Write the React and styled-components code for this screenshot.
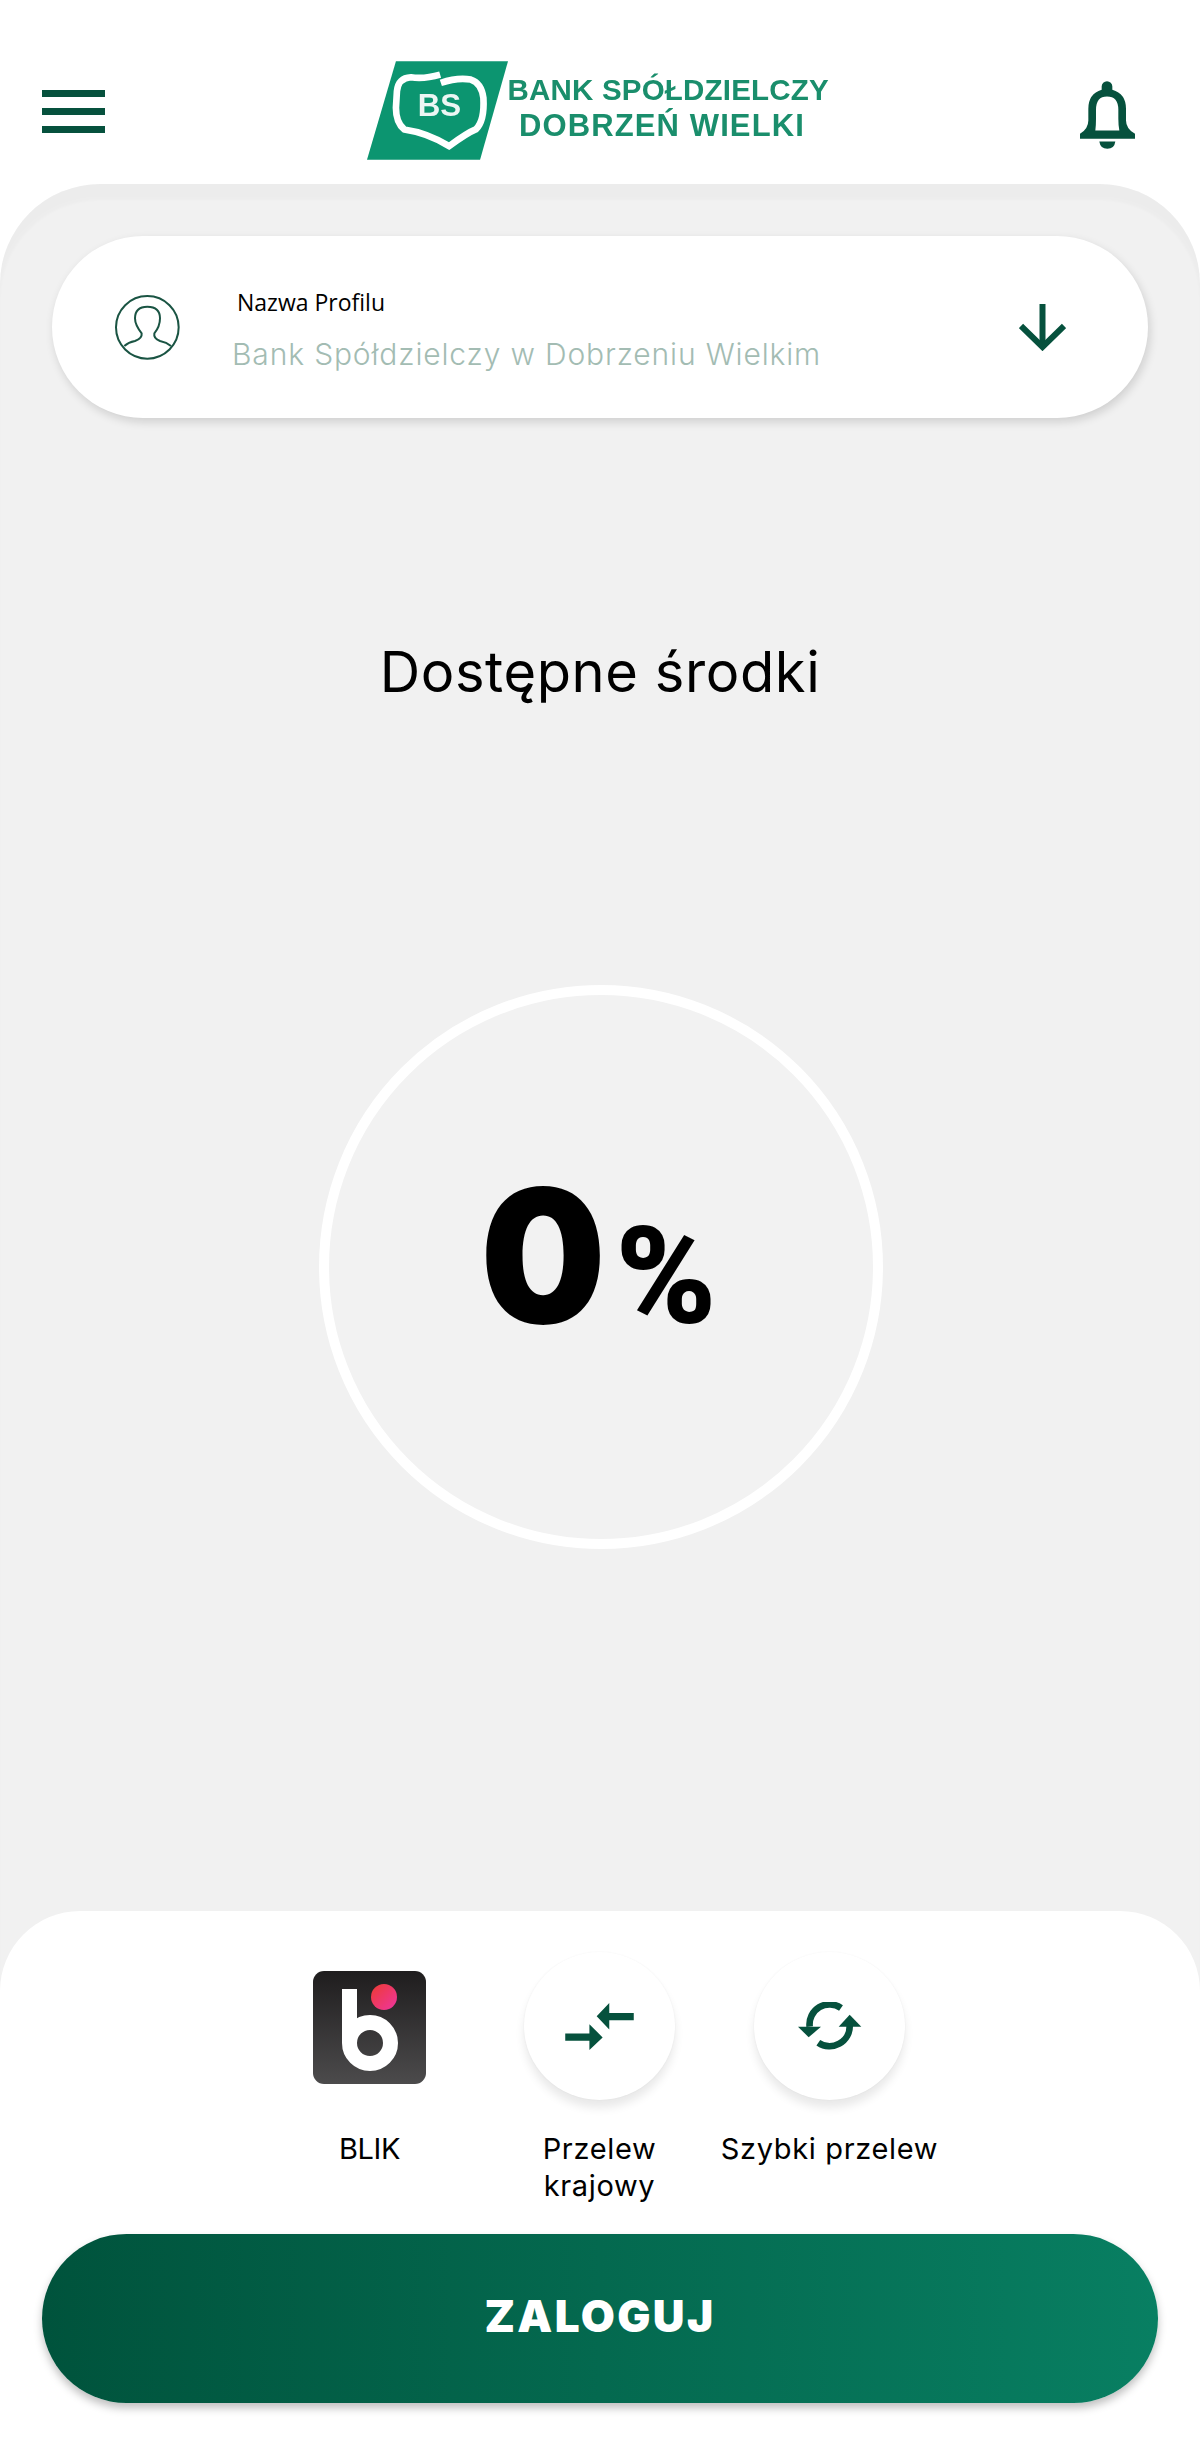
import React from "react";
import styled, { createGlobalStyle } from "styled-components";

const GREEN = "#06513d";
const SANS = '"Inter", "Liberation Sans", sans-serif';

const Reset = createGlobalStyle`
  html, body { margin: 0; padding: 0; background: #fff; }
  * { box-sizing: border-box; }
`;

const Page = styled.div`
  width: 1200px;
  height: 2443px;
  display: flex;
  flex-direction: column;
  background: #fff;
  font-family: ${SANS};
  overflow: hidden;
`;

const Header = styled.header`
  height: 184px;
  flex: none;
  display: flex;
  align-items: flex-start;
  justify-content: space-between;
  padding: 61px 65px 0 42px;
`;

const Burger = styled.button`
  width: 63px;
  margin-top: 29px;
  padding: 0;
  border: 0;
  background: none;
  display: flex;
  flex-direction: column;
  gap: 11px;
`;

const BurgerBar = styled.span`
  display: block;
  height: 7px;
  background: ${GREEN};
`;

const Logo = styled.div`
  margin-left: 10px;
  display: flex;
  filter: blur(0.35px);
`;

const LogoMark = styled.svg`
  display: block;
  width: 141px;
  height: 99px;
`;

const LogoWords = styled.div`
  width: 321px;
  padding-top: 11px;
  text-align: center;
  color: #1a8e6c;
  font-family: "Liberation Sans", Arial, sans-serif;
  font-weight: 700;
  line-height: 36px;
  white-space: nowrap;
`;

const LogoLine = styled.div`
  padding-right: ${(p) => p.$inset || 0}px;
  font-size: ${(p) => p.$size}px;
  letter-spacing: ${(p) => p.$track}px;
`;

const BellIcon = styled.svg`
  display: block;
  width: 55px;
  height: 68px;
  margin-top: 20px;
`;

const Panel = styled.main`
  flex: 1;
  display: flex;
  flex-direction: column;
  align-items: center;
  background: #f1f1f1;
  border-radius: 100px 100px 0 0;
  box-shadow: inset 0 16px 3px rgba(0, 0, 0, 0.02);
  padding-top: 52px;
`;

const ProfileCard = styled.section`
  width: 1096px;
  height: 182px;
  flex: none;
  display: flex;
  align-items: center;
  border-radius: 91px;
  background: #fff;
  box-shadow: 2px 4px 10px rgba(0, 0, 0, 0.14);
  padding: 0 82px 0 63px;
`;

const Avatar = styled.svg`
  display: block;
  width: 65px;
  height: 65px;
  flex: none;
`;

const ProfileText = styled.div`
  flex: 1;
  margin-left: 52px;
  display: flex;
  flex-direction: column;
  gap: 19px;
  padding-top: 4px;
`;

const ProfileLabel = styled.div`
  padding-left: 5px;
  font-family: "Open Sans", sans-serif;
  font-size: 23px;
  line-height: 30px;
  color: #000;
`;

const ProfileName = styled.div`
  font-weight: 300;
  font-size: 30px;
  line-height: 36px;
  letter-spacing: 0.85px;
  color: #a3bcb3;
  white-space: nowrap;
`;

const ArrowIcon = styled.svg`
  display: block;
  width: 47px;
  height: 47px;
  flex: none;
`;

const Title = styled.h1`
  margin: 214px 0 0;
  font-weight: 400;
  font-size: 56px;
  line-height: 80px;
  letter-spacing: 0.6px;
  color: #000;
`;

const Gauge = styled.div`
  margin: 273px 0 0 2px;
  width: 564px;
  height: 564px;
  flex: none;
  display: flex;
  align-items: center;
  justify-content: center;
  border: 10px solid #fff;
  border-radius: 50%;
  background: #f2f2f2;
`;

const GaugeValue = styled.div`
  display: flex;
  align-items: baseline;
  gap: 6px;
  margin: 0 8px 22px 0;
  color: #000;
  font-weight: 900;
  line-height: 1;
`;

const GaugeNumber = styled.span`
  display: inline-block;
  font-family: Inter, sans-serif;
  font-size: 186px;
  transform: scaleX(0.95);
`;

const GaugeUnit = styled.span`
  font-family: Roboto, sans-serif;
  font-size: 136px;
`;

const Sheet = styled.section`
  margin-top: auto;
  width: 100%;
  height: 532px;
  flex: none;
  background: #fff;
  border-radius: 80px 80px 0 0;
  padding: 41px 42px 0;
  display: flex;
  flex-direction: column;
`;

const Shortcuts = styled.div`
  height: 282px;
  flex: none;
  display: flex;
  justify-content: center;
  padding-right: 1px;
`;

const Shortcut = styled.div`
  width: 230px;
  display: flex;
  flex-direction: column;
  align-items: center;
  text-align: center;
`;

const IconSlot = styled.div`
  height: 178px;
  display: flex;
  align-items: flex-start;
  justify-content: center;
  padding-top: ${(p) => p.$top || 0}px;
`;

const RoundIcon = styled.div`
  width: 151px;
  height: 148px;
  border-radius: 50%;
  background: #fff;
  box-shadow: 0 8px 10px rgba(0, 0, 0, 0.09), 0 0 2px rgba(0, 0, 0, 0.05);
  display: flex;
  align-items: center;
  justify-content: center;
`;

const ShortcutLabel = styled.div`
  font-size: 29px;
  line-height: 37px;
  letter-spacing: ${(p) => p.$track ?? 0.65}px;
  color: #000;
  white-space: nowrap;
`;

const LoginButton = styled.button`
  width: 1116px;
  height: 169px;
  flex: none;
  border: 0;
  border-radius: 85px;
  background: linear-gradient(90deg, #00533c, #087f62);
  box-shadow: 0 5px 8px rgba(0, 0, 0, 0.25);
  padding: 0 0 5px;
  color: #fff;
  font-family: ${SANS};
  font-weight: 900;
  font-size: 44px;
  letter-spacing: 2.4px;
`;

function BlikMark() {
  return (
    <svg width="113" height="113" viewBox="0 0 113 113" style={{ display: "block" }}>
      <defs>
        <linearGradient id="blikTile" x1="0" y1="0" x2="0" y2="1">
          <stop offset="0" stopColor="#1f1d1e" />
          <stop offset="1" stopColor="#4c4b4c" />
        </linearGradient>
        <linearGradient id="blikDot" x1="0" y1="0" x2="1" y2="1">
          <stop offset="0" stopColor="#ee3b32" />
          <stop offset="1" stopColor="#ee35a0" />
        </linearGradient>
      </defs>
      <rect width="113" height="113" rx="11" fill="url(#blikTile)" />
      <rect x="29" y="18" width="15" height="54" fill="#fff" />
      <circle cx="57" cy="72" r="20.5" fill="none" stroke="#fff" strokeWidth="15" />
      <circle cx="71" cy="26" r="13" fill="url(#blikDot)" />
    </svg>
  );
}

function TransferIcon() {
  return (
    <svg width="69" height="47" viewBox="195 218 207 142" fill={GREEN} style={{ display: "block" }}>
      <polygon points="290,258 328,218 328,248 402,248 402,270 328,270 328,298" />
      <polygon points="308,322 268,282 268,310 195,310 195,332 268,332 268,360" />
    </svg>
  );
}

function RefreshIcon() {
  return (
    <svg width="65" height="48" viewBox="890 216 195 144" style={{ display: "block" }}>
      <path d="M1022 234A60 60 0 0 0 928 290" fill="none" stroke={GREEN} strokeWidth="20" />
      <path d="M954 338A60 60 0 0 0 1048 286" fill="none" stroke={GREEN} strokeWidth="20" />
      <polygon points="893,290 962,290 925,322" fill={GREEN} />
      <polygon points="1015,290 1083,290 1048,254" fill={GREEN} />
    </svg>
  );
}

export default function App() {
  return (
    <Page>
      <Reset />
      <Header>
        <Burger aria-label="Menu">
          <BurgerBar />
          <BurgerBar />
          <BurgerBar />
        </Burger>
        <Logo>
          <LogoMark viewBox="18 20 424 296">
            <polygon points="18,316 105,20 442,20 358,316" fill="#0c9570" />
            <path
              d="M238 60Q190 74 150 68Q112 70 108 110L105 160Q105 205 130 225Q200 235 265 275Q320 235 345 225Q372 200 368 130Q362 85 330 75Q290 68 240 85"
              fill="none"
              stroke="#fff"
              strokeWidth="20"
            />
            <text
              x="236"
              y="184"
              textAnchor="middle"
              fontFamily="Liberation Sans, Arial, sans-serif"
              fontWeight="700"
              fontSize="94"
              fill="#fff"
              opacity="0.92"
            >
              BS
            </text>
          </LogoMark>
          <LogoWords>
            <LogoLine $size={29.5} $track={0.2} $inset={4}>BANK SPÓŁDZIELCZY</LogoLine>
            <LogoLine $size={31} $track={1.1} $inset={12}>DOBRZEŃ WIELKI</LogoLine>
          </LogoWords>
        </Logo>
        <BellIcon viewBox="57 32 165 203" fill={GREEN}>
          <path
            fillRule="evenodd"
            d="M57 205L57 190Q82 175 82 150L82 115Q82 70 122 58L122 48A16 16 0 0 1 154 48L154 58Q195 70 195 115L195 150Q195 175 222 190L222 205ZM103 180L175 180Q172 165 172 145L172 118Q172 78 138 78Q105 78 105 118L105 145Q105 165 103 180Z"
          />
          <path d="M115 213L163 213Q160 235 139 235Q118 235 115 213Z" />
        </BellIcon>
      </Header>

      <Panel>
        <ProfileCard>
          <Avatar viewBox="30 30 195 195" fill="none" stroke="#1a5443" strokeWidth="6">
            <circle cx="127" cy="127" r="94" />
            <path d="M58 183Q70 172 90 168Q112 160 110 145Q90 120 90 100Q90 65 127 65Q165 65 165 100Q165 125 148 145Q145 160 165 168Q185 172 198 183" />
          </Avatar>
          <ProfileText>
            <ProfileLabel>Nazwa Profilu</ProfileLabel>
            <ProfileName>Bank Spółdzielczy w Dobrzeniu Wielkim</ProfileName>
          </ProfileText>
          <ArrowIcon viewBox="0 0 47 47" fill="none" stroke={GREEN} strokeWidth="6">
            <path d="M23.5 0V43" />
            <path d="M2 22L23.5 43L45 22" />
          </ArrowIcon>
        </ProfileCard>

        <Title>Dostępne środki</Title>

        <Gauge>
          <GaugeValue>
            <GaugeNumber>0</GaugeNumber>
            <GaugeUnit>%</GaugeUnit>
          </GaugeValue>
        </Gauge>

        <Sheet>
          <Shortcuts>
            <Shortcut>
              <IconSlot $top={19}>
                <BlikMark />
              </IconSlot>
              <ShortcutLabel $track={-0.4}>BLIK</ShortcutLabel>
            </Shortcut>
            <Shortcut>
              <IconSlot>
                <RoundIcon>
                  <TransferIcon />
                </RoundIcon>
              </IconSlot>
              <ShortcutLabel>
                Przelew
                <br />
                krajowy
              </ShortcutLabel>
            </Shortcut>
            <Shortcut>
              <IconSlot>
                <RoundIcon>
                  <RefreshIcon />
                </RoundIcon>
              </IconSlot>
              <ShortcutLabel>Szybki przelew</ShortcutLabel>
            </Shortcut>
          </Shortcuts>
          <LoginButton>ZALOGUJ</LoginButton>
        </Sheet>
      </Panel>
    </Page>
  );
}
